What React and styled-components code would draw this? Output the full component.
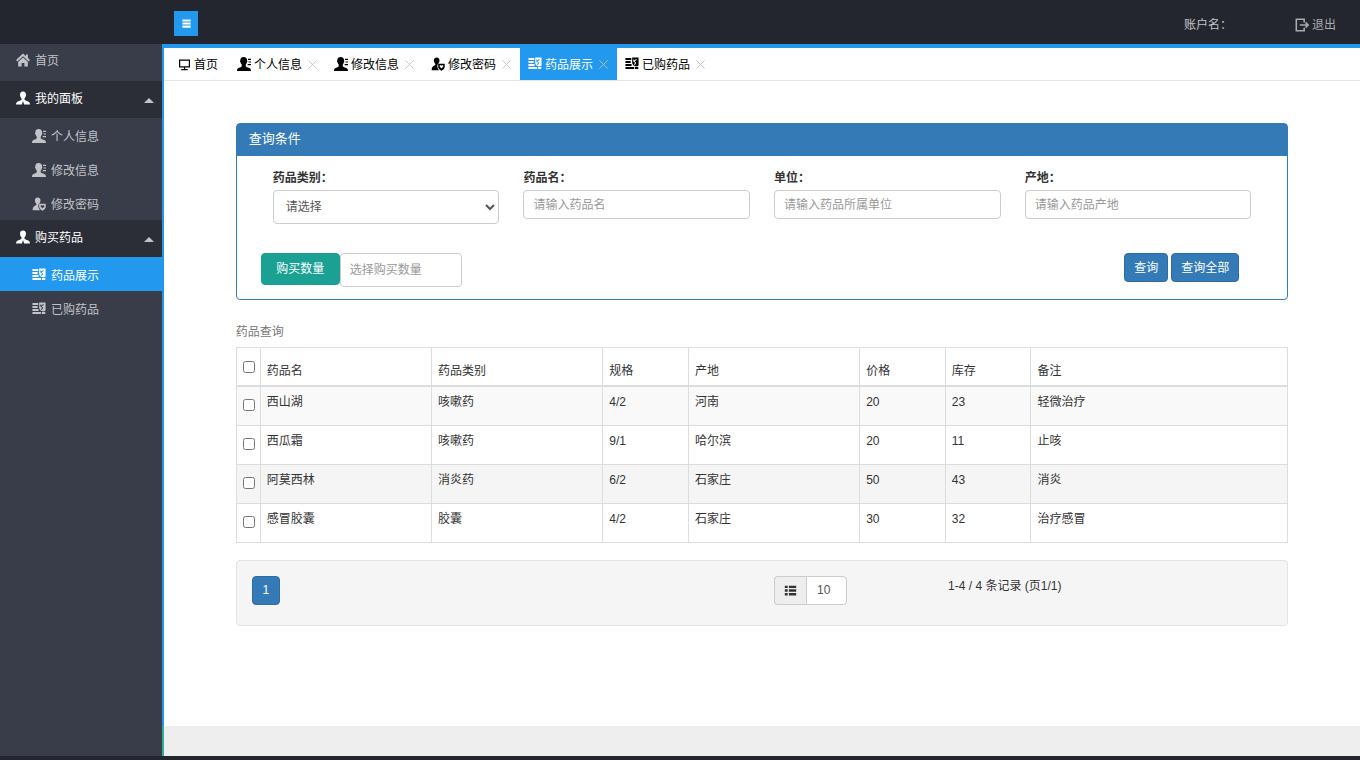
import React, { useState } from 'react';
import styled, { createGlobalStyle, css } from 'styled-components';

const GlobalStyle = createGlobalStyle`
  * {
    box-sizing: border-box;
  }

  body {
    margin: 0;
    color: #333;
    background: #fff;
    font: 12px/20px "Liberation Sans", "Noto Sans CJK SC", sans-serif;
  }

  button, input, select {
    font: inherit;
  }
`;

const icons = {
  home: (
    <>
      <path d="M8 0.500 0 8l1.500 1.600L8 3.600l6.500 6L16 8l-2.400-2.300V1.800h-2.200v1.900z" />
      <path d="M8 5 2.500 10v5.500h3.900v-4h3.200v4h3.900V10z" />
    </>
  ),
  user: (
    <path d="M8 .5C5.600.5 4.400 2.200 4.600 4.500c.1 1.800.8 3.100 1.700 3.900v1.300c-.3.800-1.300 1.200-2.700 1.600C1.200 12 0 12.700 0 15.500h6.700L8 11.500l1.300 4H16c0-2.800-1.200-3.500-3.600-4.200-1.400-.4-2.400-.8-2.700-1.600V8.400c.9-.8 1.600-2.100 1.700-3.900C11.600 2.200 10.400.5 8 .5z" />
  ),
  profile: (
    <>
      <path d="M7.500 0C4.900 0 3.700 1.700 3.800 4c-.6.300-.3 2 .3 2.200.2 1.100.7 1.900 1.300 2.500v1.800c-.5 1-1.900 1.200-3.100 1.700C.7 12.800 0 13.700 0 16h16c0-2.300-.9-3.200-2.600-3.800-1.200-.5-2.900-.7-3.400-1.700V8.700c.6-.6 1-1.400 1.200-2.500.6-.2.900-1.900.3-2.200C11.600 1.700 10.100 0 7.500 0z" />
      <path d="M12.600 2H16v1.300h-3.400zM13.200 5H16v1.300h-2.800zM12.200 8H16v1.300h-3.800z" />
    </>
  ),
  password: (
    <>
      <path d="M6.500 .5C4.300.5 3.200 2 3.300 4c.1 1.700.8 3 1.700 3.800v1.100C4.200 10 .8 10 .8 15h8.400C7.600 13.500 7 11.500 7.300 9.200L8.100 7.800c.9-.8 1.500-2.100 1.600-3.800C9.800 2 8.700.5 6.500.5z" />
      <path
        fillRule="evenodd"
        d="M8.200 7.600h7.500v3.600c0 2.100-1.600 3.400-3.700 4.400-2.200-1-3.800-2.300-3.800-4.400zM12 13l2-2.200c.7-1.200-1.100-2-2-.8-.9-1.200-2.700-.4-2 .8z"
      />
    </>
  ),
  drugs: (
    <>
      <path d="M.5 1h6.700v2.400H.5zM.5 4.600h6v2.200h-6zM.5 8h7v2.200h-7zM.5 11.500h9.700v2.300H.5z" />
      <path
        fillRule="evenodd"
        d="M8.200.5h7.300v9.300c-1 .8-2 1-2.500 1-2.800-.5-4.800-2-4.800-4.600zM9.500 3v2l2 1.500-1.200 2 1 .6 1.500-2.500L11 5.200 13.500 3l-.8-.8L11 3.800 9.800 2.500zM11.200 11.500h4v2.300h-4z"
      />
    </>
  ),
  monitor: (
    <path
      d="M2 2.500h12v8.500H2zM8 11v3M4 14.300h8"
      fill="none"
      stroke="currentColor"
      strokeWidth="1.500"
    />
  ),
  logout: (
    <path
      d="M10.500 5V1.500h-9v13h9V11M5.500 8h9M12 5l3 3-3 3"
      fill="none"
      stroke="currentColor"
      strokeWidth="1.800"
    />
  ),
  bars: <path d="M2 2h12v3H2zM2 6.500h12v3H2zM2 11h12v3H2z" />,
  list: (
    <path d="M1 2h3.500v3H1zM6 2h9v3H6zM1 6.500h3.500v3H1zM6 6.500h9v3H6zM1 11h3.500v3H1zM6 11h9v3H6z" />
  ),
  close: (
    <path d="M2 2l12 12M14 2L2 14" fill="none" stroke="currentColor" strokeWidth="1.300" />
  ),
};

const Icon = ({ name, size = 14 }) => (
  <Svg width={size} height={size} viewBox="0 0 16 16" fill="currentColor" aria-hidden="true">
    {icons[name]}
  </Svg>
);

const menu = [
  {
    title: '我的面板',
    items: [
      { icon: 'profile', label: '个人信息' },
      { icon: 'profile', label: '修改信息' },
      { icon: 'password', label: '修改密码' },
    ],
  },
  {
    title: '购买药品',
    items: [
      { icon: 'drugs', label: '药品展示' },
      { icon: 'drugs', label: '已购药品' },
    ],
  },
];

const tabs = menu.reduce((all, group) => all.concat(group.items), []);

const columns = [
  { title: '药品名', units: 2 },
  { title: '药品类别', units: 2 },
  { title: '规格', units: 1 },
  { title: '产地', units: 2 },
  { title: '价格', units: 1 },
  { title: '库存', units: 1 },
  { title: '备注', units: 3 },
];

const drugs = [
  ['西山湖', '咳嗽药', '4/2', '河南', '20', '23', '轻微治疗'],
  ['西瓜霜', '咳嗽药', '9/1', '哈尔滨', '20', '11', '止咳'],
  ['阿莫西林', '消炎药', '6/2', '石家庄', '50', '43', '消炎'],
  ['感冒胶囊', '胶囊', '4/2', '石家庄', '30', '32', '治疗感冒'],
];

const filters = [
  { id: 'name', label: '药品名：', placeholder: '请输入药品名' },
  { id: 'unit', label: '单位：', placeholder: '请输入药品所属单位' },
  { id: 'origin', label: '产地：', placeholder: '请输入药品产地' },
];

const Sidebar = ({ current, onSelect }) => (
  <Side>
    <HomeLink href="#home"><Icon name="home" />首页</HomeLink>
    {menu.map(group => (
      <div key={group.title}>
        <GroupButton type="button">
          <Icon name="user" />
          {group.title}
          <Caret />
        </GroupButton>
        {group.items.map(item => (
          <SubLink
            key={item.label}
            href="#page"
            $active={item.label === current}
            onClick={() => onSelect(item.label)}
          >
            <Icon name={item.icon} />
            {item.label}
          </SubLink>
        ))}
      </div>
    ))}
  </Side>
);

const TabBar = ({ current, onSelect }) => (
  <Tabs>
    <HomeTab>
      <TabButton type="button"><Icon name="monitor" size={13} />首页</TabButton>
    </HomeTab>
    {tabs.map(tab => (
      <Tab key={tab.label} $active={tab.label === current}>
        <TabButton type="button" onClick={() => onSelect(tab.label)}>
          <Icon name={tab.icon} />
          {tab.label}
        </TabButton>
        <CloseButton type="button" aria-label={`关闭${tab.label}`}>
          <Icon name="close" size={11} />
        </CloseButton>
      </Tab>
    ))}
  </Tabs>
);

const SearchPanel = () => (
  <Panel>
    <PanelTitle>查询条件</PanelTitle>
    <Fields>
      <Field>
        <label htmlFor="category">药品类别：</label>
        <Select id="category">
          <option>请选择</option>
        </Select>
      </Field>
      {filters.map(({ id, label, placeholder }) => (
        <Field key={id}>
          <label htmlFor={id}>{label}</label>
          <Input id={id} placeholder={placeholder} />
        </Field>
      ))}
    </Fields>
    <Actions>
      <BuyButton type="button">购买数量</BuyButton>
      <CountInput aria-label="购买数量" placeholder="选择购买数量" />
      <Right>
        <Button type="button">查询</Button>
        <Button type="button">查询全部</Button>
      </Right>
    </Actions>
  </Panel>
);

const DrugTable = () => (
  <Table>
    <caption>药品查询</caption>
    <colgroup>
      <CheckCol />
      {columns.map(({ title, units }) => (
        <col key={title} style={{ width: `${(units / 12) * 100}%` }} />
      ))}
    </colgroup>
    <thead>
      <tr>
        <th><input type="checkbox" aria-label="全选" /></th>
        {columns.map(({ title }) => <th key={title}>{title}</th>)}
      </tr>
    </thead>
    <tbody>
      {drugs.map(row => (
        <tr key={row[0]}>
          <td><input type="checkbox" aria-label={row[0]} /></td>
          {row.map((value, i) => <td key={columns[i].title}>{value}</td>)}
        </tr>
      ))}
    </tbody>
  </Table>
);

const App = () => {
  const [current, setCurrent] = useState('药品展示');

  return (
    <Page>
      <GlobalStyle />
      <Header>
        <ToggleButton type="button" aria-label="菜单"><Icon name="bars" size={11} /></ToggleButton>
        <Account>
          <span>账户名：</span>
          <LogoutLink href="#logout"><Icon name="logout" />退出</LogoutLink>
        </Account>
      </Header>
      <Body>
        <Sidebar current={current} onSelect={setCurrent} />
        <Main>
          <TabBar current={current} onSelect={setCurrent} />
          <Content>
            <SearchPanel />
            <DrugTable />
            <Pager>
              <div><PageButton type="button">1</PageButton></div>
              <PageSize>
                <label htmlFor="size" aria-label="每页条数"><Icon name="list" size={13} /></label>
                <input id="size" defaultValue="10" />
              </PageSize>
              <Summary>1-4 / 4 条记录 (页1/1)</Summary>
            </Pager>
          </Content>
          <Footer />
        </Main>
      </Body>
    </Page>
  );
};

const Svg = styled.svg`
  display: block;
  flex: none;
`;

const Page = styled.div`
  display: flex;
  flex-direction: column;
  min-height: 100vh;
  border-bottom: 4px solid #23262e;
`;

const Header = styled.header`
  display: flex;
  align-items: center;
  height: 44px;
  padding: 3px 24px 0 174px;
  background: #23262e;
`;

const ToggleButton = styled.button`
  display: flex;
  align-items: center;
  justify-content: center;
  width: 24px;
  height: 25px;
  padding: 0;
  border: 0;
  color: #fff;
  background: #2299ee;
`;

const Account = styled.div`
  display: flex;
  gap: 63px;
  margin-left: auto;
  padding-top: 3px;
  color: #c2c3c6;
`;

const LogoutLink = styled.a`
  display: flex;
  align-items: center;
  gap: 3px;
  color: #a9abaf;
  text-decoration: none;
`;

const Body = styled.div`
  display: flex;
  flex: 1;
`;

const Side = styled.nav`
  flex: none;
  width: 162px;
  background: #393d49;
`;

const item = css`
  display: flex;
  align-items: center;
  gap: 5px;
  width: 100%;
  color: #c2c3c7;
  text-decoration: none;

  svg {
    margin-bottom: 2px;
  }
`;

const HomeLink = styled.a`
  ${item}
  height: 37px;
  padding: 0 8px 3px 16px;
`;

const GroupButton = styled.button`
  ${item}
  height: 37px;
  padding: 0 8px 2px 16px;
  border: 0;
  color: #fff;
  background: #2b2e37;
`;

const Caret = styled.span`
  margin: 4px 0 0 auto;
  border: 5px solid transparent;
  border-top: 0;
  border-bottom-color: #c2c3c7;
`;

const SubLink = styled.a`
  ${item}
  height: 34px;
  padding: 4px 8px 0 32px;

  ${({ $active }) => $active && css`
    color: #fff;
    background: #2299ee;
  `}
`;

const Main = styled.main`
  display: flex;
  flex: 1;
  flex-direction: column;
  min-width: 0;
  border-top: 4px solid #2196ea;
  border-left: 2px solid #2196ea;
`;

const Tabs = styled.div`
  display: flex;
  height: 33px;
  border-bottom: 1px solid #e6e6e6;
`;

const Tab = styled.div`
  display: flex;
  align-items: center;
  gap: 5px;
  padding: 0 8px;
  color: ${({ $active }) => ($active ? '#fff' : '#000')};
  background: ${({ $active }) => ($active ? '#2299ee' : 'none')};
`;

const HomeTab = styled(Tab)`
  padding: 0 11px 0 14px;
`;

const TabButton = styled.button`
  display: flex;
  align-items: center;
  gap: 3px;
  padding: 2px 0 0;
  border: 0;
  color: inherit;
  background: none;

  svg {
    margin-bottom: 2px;
  }
`;

const CloseButton = styled(TabButton)`
  color: #c2c2c2;
`;

const Content = styled.div`
  flex: 1;
  padding: 42px 6% 24px;
`;

const Panel = styled.section`
  border: 1px solid #337ab7;
  border-radius: 4px;
`;

const PanelTitle = styled.h2`
  margin: 0;
  padding: 5px 12px 7px;
  color: #fff;
  background: #337ab7;
  font-size: 13px;
  font-weight: normal;
`;

const Fields = styled.div`
  display: grid;
  grid-template-columns: repeat(4, 1fr);
  align-items: start;
  gap: 24px;
  padding: 12px 36px 0;
`;

const Field = styled.div`
  display: flex;
  flex-direction: column;
  gap: 2px;

  label {
    font-weight: bold;
  }
`;

const control = css`
  width: 100%;
  border: 1px solid #ccc;
  border-radius: 4px;
  color: #555;
  background: #fff;
  outline: 0;

  &::placeholder {
    color: #999;
  }
`;

const Input = styled.input`
  ${control}
  height: 29px;
  padding: 0 9px;
`;

const Select = styled.select`
  ${control}
  height: 34px;
  padding: 0 0 0 8px;
`;

const CountInput = styled.input`
  ${control}
  width: 122px;
  height: 34px;
  padding: 0 9px;
`;

const Actions = styled.div`
  display: flex;
  align-items: flex-start;
  padding: 29px 48px 12px 24px;
`;

const Right = styled.div`
  display: flex;
  gap: 3px;
  margin-left: auto;
`;

const Button = styled.button`
  height: 29px;
  padding: 0 9px;
  border: 1px solid #2e6da4;
  border-radius: 4px;
  color: #fff;
  background: #337ab7;
`;

const BuyButton = styled(Button)`
  width: 79px;
  height: 32px;
  border-color: #18a090;
  background: #1aa194;
`;

const PageButton = styled(Button)`
  width: 28px;
`;

const Table = styled.table`
  width: 100%;
  margin-top: 19px;
  table-layout: fixed;
  border-collapse: collapse;

  caption {
    padding: 3px 0 5px;
    color: #777;
    text-align: left;
  }

  th, td {
    height: 39px;
    padding: 5px 6px;
    border: 1px solid #ddd;
    font-weight: normal;
    text-align: left;
    vertical-align: top;
  }

  th {
    height: 37px;
    padding: 13px 6px 4px;
    border-bottom-width: 2px;
  }

  tbody tr:nth-child(odd) {
    background: #f9f9f9;
  }

  tbody tr:nth-child(3) {
    background: #f5f5f5;
  }

  input {
    display: block;
    width: 12px;
    height: 12px;
    margin: 7px 0 0;
  }

  th input {
    margin: 0;
  }
`;

const CheckCol = styled.col`
  width: 24px;
`;

const Pager = styled.div`
  display: grid;
  grid-template-columns: 6fr 2fr 4fr;
  align-items: start;
  margin-top: 17px;
  padding: 15px 15px 20px;
  border: 1px solid #e3e3e3;
  border-radius: 4px;
  background: #f5f5f5;
`;

const PageSize = styled.div`
  display: flex;
  padding-left: 12px;

  label, input {
    height: 29px;
    border: 1px solid #ccc;
  }

  label {
    display: flex;
    align-items: center;
    padding: 0 9px;
    border-right: 0;
    border-radius: 4px 0 0 4px;
    background: #eee;
  }

  input {
    width: 41px;
    padding: 0 10px;
    border-radius: 0 4px 4px 0;
    color: #555;
  }
`;

const Summary = styled.div`
  padding-left: 16px;
`;

const Footer = styled.footer`
  height: 30px;
  margin-left: -2px;
  border-left: 2px solid #2fae9a;
  background: #eee;
`;

export default App;
